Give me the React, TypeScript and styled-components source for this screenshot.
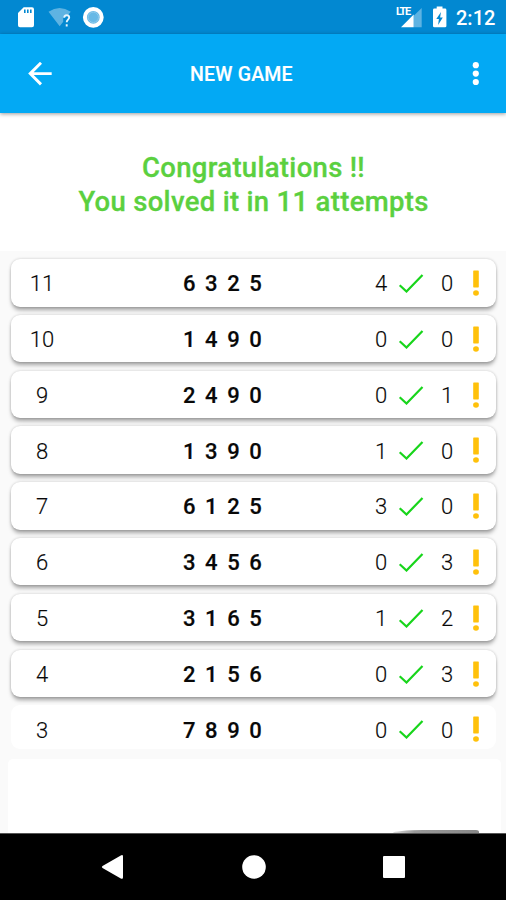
import React from "react";
import styled, { createGlobalStyle } from "styled-components";

const GlobalStyle = createGlobalStyle`
  *, *::before, *::after { box-sizing: border-box; }
  body { margin: 0; background: #fafafa; font-family: Roboto, "Liberation Sans", sans-serif; }
  svg { display: block; flex: none; }
`;

const Screen = styled.div`
  width: 506px;
  height: 900px;
  display: flex;
  flex-direction: column;
  overflow: hidden;
  background: #fafafa;
`;

const StatusBar = styled.header`
  height: 34px;
  flex: none;
  display: flex;
  align-items: center;
  justify-content: space-between;
  padding: 0 10px 0 17px;
  background: #0288d1;
`;

const StatusGroup = styled.div`
  display: flex;
  align-items: center;
`;

const Clock = styled.span`
  margin-left: 9px;
  padding-top: 2px;
  color: #fff;
  font-size: 20px;
  line-height: 24px;
  font-weight: 500;
  width: 40px;
  white-space: nowrap;
`;

const AppBar = styled.nav`
  height: 79px;
  flex: none;
  display: grid;
  grid-template-columns: 80px 1fr 60px;
  align-items: center;
  background: #03a9f4;
  color: #fff;
  box-shadow: 0 1px 4px rgba(0, 0, 0, 0.4);
  z-index: 1;
`;

const BarButton = styled.button<{ $inset: number }>`
  padding: 0 0 0 ${(p) => p.$inset}px;
  border: 0;
  background: none;
  color: inherit;
`;

const Title = styled.h1`
  margin: 3px 0 0 110px;
  font-size: 19.5px;
  line-height: 24px;
  font-weight: 500;
  letter-spacing: 0.2px;
  -webkit-text-stroke: 0.2px;
  white-space: nowrap;
`;

const Message = styled.section`
  height: 138px;
  flex: none;
  padding: 38px 0 0 1px;
  background: #fff;
  color: #5bd03f;
  font-size: 27.5px;
  line-height: 33.5px;
  font-weight: 500;
  letter-spacing: 0.3px;
  -webkit-text-stroke: 0.3px;
  text-align: center;
  white-space: nowrap;
`;

const MessageLine = styled.p`
  margin: 0;
`;

const AttemptList = styled.ol`
  height: 498px;
  flex: none;
  margin: 0;
  padding: 8px 10px 0 11px;
  list-style: none;
  overflow: hidden;
  display: flex;
  flex-direction: column;
  gap: 8.3px;
`;

const AttemptCard = styled.li<{ $clipped: boolean }>`
  height: ${(p) => (p.$clipped ? 43.5 : 47.5)}px;
  flex: none;
  display: grid;
  grid-template-columns: 62px 300px 16px 43px 23px 41px;
  grid-template-rows: 48px;
  align-items: center;
  border-radius: 9px;
  background: #fff;
  color: #080808;
  font-size: 22px;
  line-height: 26px;
  box-shadow: ${(p) =>
    p.$clipped ? "none" : "0 4px 4px -1px rgba(0, 0, 0, 0.34), 0 0 3px rgba(0, 0, 0, 0.2)"};
`;

const Count = styled.span<{ $shift?: number }>`
  padding: 2.5px 0 0 ${(p) => p.$shift ?? 0}px;
  text-align: center;
  font-weight: 300;
  -webkit-text-stroke: 0.15px;
`;

const Guess = styled.span`
  padding: 2.5px 0 0 110px;
  font-weight: 500;
  letter-spacing: 2.05px;
  -webkit-text-stroke: 0.2px;
  white-space: nowrap;
`;

const Mark = styled.span`
  display: flex;
  justify-content: center;
`;

const EntryPanel = styled.section`
  flex: 1;
  margin: 10px 5px 0 8px;
  display: flex;
  align-items: flex-end;
  justify-content: flex-end;
  padding-right: 22px;
  border-radius: 5px 5px 0 0;
  background: #fff;
`;

const ButtonEdge = styled.div`
  width: 86px;
  height: 3px;
  border-radius: 30px 3px 0 0 / 3px 2px 0 0;
  background: linear-gradient(90deg, #ddd, #999 25%, #888);
`;

const NavigationBar = styled.footer`
  height: 67px;
  flex: none;
  display: flex;
  align-items: center;
  justify-content: center;
  gap: 117px;
  background: #000;
  border-top: 1px solid #555;
`;

const attempts = [
  [11, "6 3 2 5", 4, 0],
  [10, "1 4 9 0", 0, 0],
  [9, "2 4 9 0", 0, 1],
  [8, "1 3 9 0", 1, 0],
  [7, "6 1 2 5", 3, 0],
  [6, "3 4 5 6", 0, 3],
  [5, "3 1 6 5", 1, 2],
  [4, "2 1 5 6", 0, 3],
  [3, "7 8 9 0", 0, 0],
] as const;

const NoticeIcons = () => (
  <svg width="90" height="34" viewBox="17 0 90 34">
    <path fillRule="evenodd" fill="#fff" d="M23.7 7.3H32q2 0 2 2v16q0 2-2 2H20q-2 0-2-2V13zM24 9.5v3.6h1.6V9.5zm3 0v3.6h1.6V9.5zm3 0v3.6h1.6V9.5z" />
    <path fill="#5eb3e2" d="M48.5 11.7Q59.5 4.5 70.8 11.7L68 15q-4-1-4.8 3v3.8l-3.5 4.4z" />
    <path fill="none" stroke="#e6f6ff" strokeWidth="1.9" d="M64.2 17.8q0-2.6 2.5-2.6t2.5 2.4c0 2-2.5 2.2-2.5 4.6m0 2v2.2" />
    <circle cx="93.3" cy="17.3" r="8.4" fill="#67b9e6" stroke="#fff" strokeWidth="4" />
    <circle cx="93.3" cy="17.3" r="5.2" fill="#67b9e6" stroke="#8fcbed" strokeWidth="1" />
  </svg>
);

const LteLabel = styled.span`
  width: 5px;
  align-self: flex-start;
  padding-top: 6px;
  color: #fff;
  font-size: 11px;
  line-height: 12px;
  font-weight: 700;
  letter-spacing: -1.3px;
  white-space: nowrap;
`;

const SystemIcons = () => (
  <svg width="46" height="34" viewBox="401 0 46 34">
    <path fill="#5eb3e2" d="M414 15.5L421.7 8v19.3H414z" />
    <path fill="#fff" d="M401 27.3L413.7 14.5v12.8z" />
    <path fill="#fff" d="M436.7 6.5h5.8v2h2.5q1.4 0 1.4 1.4v16q0 1.4-1.4 1.4h-10.6q-1.4 0-1.4-1.4v-16q0-1.4 1.4-1.4h2.3z" />
    <path fill="#0288d1" d="M441 12l-4.7 7h2.6l-.8 6 4.7-7.4h-2.7z" />
  </svg>
);

export default function App() {
  return (
    <Screen>
      <GlobalStyle />
      <StatusBar>
        <StatusGroup>
          <NoticeIcons />
        </StatusGroup>
        <StatusGroup>
          <LteLabel>LTE</LteLabel>
          <SystemIcons />
          <Clock>2:12</Clock>
        </StatusGroup>
      </StatusBar>
      <AppBar>
        <BarButton $inset={28} aria-label="Back">
          <svg width="24" height="24" viewBox="0 0 24 24" fill="none" stroke="#fff" strokeWidth="2.9">
            <path d="M23.7 11.6H3M13 .8L2.2 11.6L13 22.4" />
          </svg>
        </BarButton>
        <Title>NEW GAME</Title>
        <BarButton $inset={25} aria-label="More options">
          <svg width="10" height="24" viewBox="0 0 10 24" fill="#fff">
            <circle cx="4.8" cy="3.2" r="3.1" />
            <circle cx="4.8" cy="11.6" r="3.1" />
            <circle cx="4.8" cy="20" r="3.1" />
          </svg>
        </BarButton>
      </AppBar>
      <Message>
        <MessageLine>Congratulations !!</MessageLine>
        <MessageLine>You solved it in 11 attempts</MessageLine>
      </Message>
      <AttemptList>
        {attempts.map(([turn, guess, exact, misplaced], index) => (
          <AttemptCard key={turn} $clipped={index === attempts.length - 1}>
            <Count>{turn}</Count>
            <Guess>{guess}</Guess>
            <Count>{exact}</Count>
            <Mark>
              <svg width="26" height="20" viewBox="0 0 26 20" fill="none" stroke="#18d51b" strokeWidth="2.2">
                <path d="M1.7 12.2L8.5 18.5L24.5 2" />
              </svg>
            </Mark>
            <Count $shift={7}>{misplaced}</Count>
            <Mark>
              <svg width="8" height="26" viewBox="0 0 8 26" fill="#ffc10b">
                <rect x="1.2" y="0.4" width="5.6" height="17" rx="0.6" />
                <ellipse cx="4" cy="23" rx="2.9" ry="2.7" />
              </svg>
            </Mark>
          </AttemptCard>
        ))}
      </AttemptList>
      <EntryPanel>
        <ButtonEdge />
      </EntryPanel>
      <NavigationBar>
        <svg width="24" height="26" viewBox="0 0 24 26" fill="#fff">
          <path d="M1.5 12.1L19.8 1.4Q22 .3 22 2.5v20.8q0 2.3-2.2 1.1L1.5 13.9q-1.4-.9 0-1.8z" />
        </svg>
        <svg width="24" height="24" viewBox="0 0 24 24">
          <circle cx="12" cy="12" r="11.8" fill="#fff" />
        </svg>
        <svg width="22" height="22" viewBox="0 0 22 22">
          <rect width="22" height="22" rx="1" fill="#fff" />
        </svg>
      </NavigationBar>
    </Screen>
  );
}
